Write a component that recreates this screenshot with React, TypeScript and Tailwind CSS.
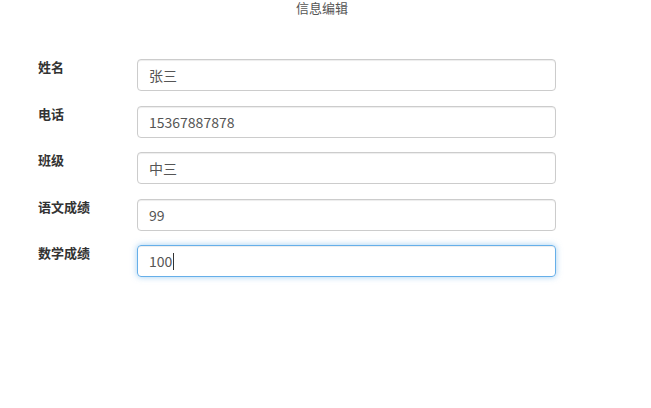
const rows = [
  { label: "姓名", value: "张三" },
  { label: "电话", value: "15367887878" },
  { label: "班级", value: "中三" },
  { label: "语文成绩", value: "99" },
];

const font = "font-['Noto_Sans_CJK_SC','Microsoft_YaHei',sans-serif]";

export default function App() {
  return (
    <main className={`min-h-screen bg-white ${font}`}>
      <h1 className="pr-[7px] pt-[1px] text-center text-[13px] leading-[14px] text-[#555]">信息编辑</h1>

      <form className="mt-[44px] flex flex-col gap-[14.5px] pl-[38px]">
        {rows.map((r) => (
          <div key={r.label} className="flex items-start">
            <label className="w-[99px] text-[13px] font-bold leading-[16px] text-[#333]">
              {r.label}
            </label>
            <input
              readOnly
              value={r.value}
              className="h-[32px] w-[419px] rounded-[4px] border border-[#ccc] px-[11px] text-[14px] text-[#555] shadow-[inset_0_1px_1px_rgba(0,0,0,0.075)] outline-none"
            />
          </div>
        ))}
        <div className="flex items-start">
          <label className="w-[99px] text-[13px] font-bold leading-[16px] text-[#333]">
            数学成绩
          </label>
          <div className="flex h-[32px] w-[419px] items-center rounded-[4px] border border-[#66afe9] px-[11px] text-[14px] text-[#555] shadow-[inset_0_1px_1px_rgba(0,0,0,0.075),0_0_6px_rgba(102,175,233,0.6)]">
            <span>100</span>
            <span className="ml-[1px] h-[17px] w-[1px] bg-[#333]" />
          </div>
        </div>
      </form>
    </main>
  );
}
